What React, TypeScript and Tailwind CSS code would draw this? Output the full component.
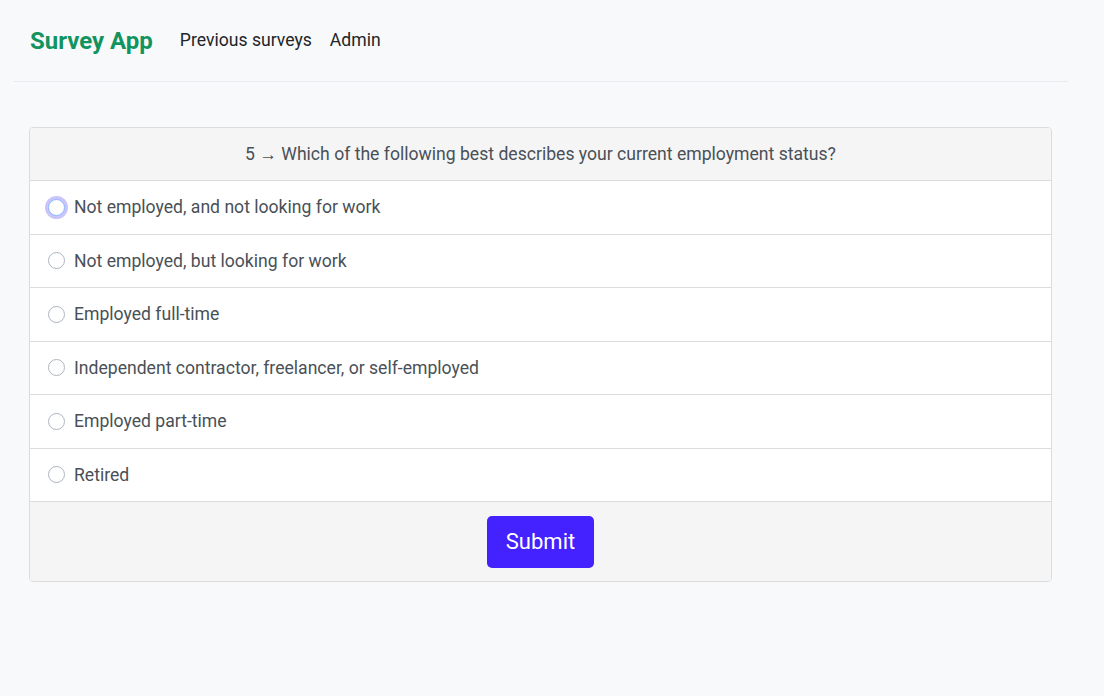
import { useState } from "react";

const options = [
  "Not employed, and not looking for work",
  "Not employed, but looking for work",
  "Employed full-time",
  "Independent contractor, freelancer, or self-employed",
  "Employed part-time",
  "Retired",
];

const App = () => {
  const [choice, setChoice] = useState<string | null>(null);

  return (
    <div className="min-h-screen w-full bg-[#f8f9fa] font-['Roboto',sans-serif]">
      <div className="ml-[13px] w-[1055px]">
        <nav className="flex items-center h-[82px] border-b border-[#e9ecef] pl-[17px]">
          <span className="text-[24px] font-bold text-[#12935f] mr-[27px]">Survey App</span>
          <a className="text-[17.6px] text-[#212529] mr-[18px]">Previous surveys</a>
          <a className="text-[17.6px] text-[#212529]">Admin</a>
        </nav>

        <div className="mx-4 mt-[45px] rounded border border-[#dcdcdc] bg-white overflow-hidden">
          <div className="h-[53px] flex items-center justify-center bg-[#f5f5f5] border-b border-[#dcdcdc] text-[17.6px] text-[#495057]">
            5 → Which of the following best describes your current employment status?
          </div>
          {options.map((opt, i) => (
            <label
              key={opt}
              className="h-[53.5px] flex items-center gap-[9px] pl-[18px] border-b border-[#dcdcdc] text-[17.6px] text-[#495057] cursor-pointer"
            >
              <span
                className={
                  i === 0
                    ? "w-[17px] h-[17px] rounded-full border border-[#86b7fe] bg-white ring-[3px] ring-[#c9c4fb]"
                    : "w-[17px] h-[17px] rounded-full border border-[#adb5bd] bg-white"
                }
                onClick={() => setChoice(opt)}
              />
              {opt}
            </label>
          ))}
          <div className="h-[79px] flex items-center justify-center bg-[#f5f5f5]">
            <button className="w-[107px] h-[52px] rounded-[5px] bg-[#4421ff] text-white text-[22px]">
              Submit
            </button>
          </div>
        </div>
      </div>
    </div>
  );
};

export default App;
